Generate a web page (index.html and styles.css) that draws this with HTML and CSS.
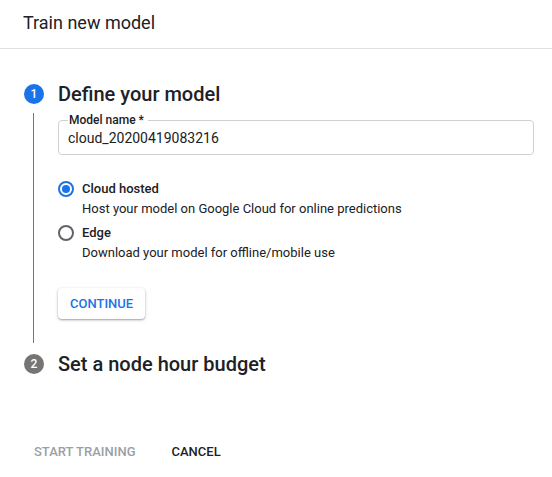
FILE: index.html
```html
<!DOCTYPE html>
<html>
<head>
<meta charset="utf-8">
<link rel="stylesheet" href="styles.css">
</head>
<body>
<div class="dialog">
  <div class="header">Train new model</div>
  <div class="stepper">
    <div class="step">
      <div class="step-head">
        <span class="badge active">1</span>
        <span class="step-title">Define your model</span>
      </div>
      <div class="step-body">
        <fieldset class="field">
          <legend>Model name *</legend>
          <div class="value">cloud_20200419083216</div>
        </fieldset>
        <div class="radios">
          <div class="radio-row">
            <span class="radio checked"></span>
            <div class="radio-text">
              <div class="radio-label">Cloud hosted</div>
              <div class="radio-desc">Host your model on Google Cloud for online predictions</div>
            </div>
          </div>
          <div class="radio-row">
            <span class="radio"></span>
            <div class="radio-text">
              <div class="radio-label">Edge</div>
              <div class="radio-desc">Download your model for offline/mobile use</div>
            </div>
          </div>
        </div>
        <button class="btn-raised">CONTINUE</button>
      </div>
    </div>
    <div class="step">
      <div class="step-head">
        <span class="badge">2</span>
        <span class="step-title">Set a node hour budget</span>
      </div>
    </div>
  </div>
  <div class="actions">
    <button class="btn-flat disabled">START TRAINING</button>
    <button class="btn-flat">CANCEL</button>
  </div>
</div>
</body>
</html>
```
FILE: styles.css
```css
* { box-sizing: border-box; }
html, body { margin: 0; padding: 0; background: #fff; }
body {
  font-family: Roboto, "Liberation Sans", Arial, sans-serif;
  color: #202124;
  width: 552px;
  height: 477px;
  overflow: hidden;
}
.header {
  height: 49px;
  border-bottom: 1px solid #e0e0e0;
  padding: 12px 0 0 23px;
  font-size: 18px;
  line-height: 22px;
  color: #202124;
}
.stepper {
  padding: 35px 18px 0 24px;
}
.step-head {
  display: flex;
  align-items: center;
  height: 20px;
}
.badge {
  width: 20px;
  height: 20px;
  border-radius: 50%;
  background: #757575;
  color: #fff;
  font-size: 12px;
  font-weight: 500;
  display: flex;
  align-items: center;
  justify-content: center;
  margin-right: 14px;
  flex: none;
}
.badge.active { background: #1a73e8; }
.step-title {
  font-size: 20px;
  font-weight: 500;
  line-height: 24px;
  color: #202124;
}
.step-body {
  margin: 9px 0 11px 9px;
  border-left: 1px solid #757575;
  padding: 1px 0 24px 24px;
}
.field {
  margin: 0;
  padding: 0 9px 0 9px;
  border: 1px solid #d0d0d0;
  border-radius: 4px;
  height: 41px;
  min-width: 0;
}
.field legend {
  font-size: 12px;
  font-weight: 500;
  line-height: 12px;
  padding: 0 4px 0 1px;
  color: #202124;
}
.value {
  font-size: 14px;
  line-height: 18px;
  padding-top: 3px;
  color: #202124;
}
.radios {
  margin-top: 25px;
  display: flex;
  flex-direction: column;
  gap: 5px;
}
.radio-row {
  display: flex;
  align-items: flex-start;
}
.radio {
  width: 16px;
  height: 16px;
  border-radius: 50%;
  border: 2px solid #5f6368;
  margin: 1px 8px 0 0;
  flex: none;
  display: flex;
  align-items: center;
  justify-content: center;
}
.radio.checked { border-color: #1a73e8; }
.radio.checked::after {
  content: "";
  width: 8px;
  height: 8px;
  border-radius: 50%;
  background: #1a73e8;
}
.radio-label {
  font-size: 13px;
  font-weight: 500;
  line-height: 18px;
}
.radio-desc {
  font-size: 13px;
  line-height: 20px;
  margin-top: 1px;
  color: #202124;
}
.btn-raised {
  margin-top: 25px;
  height: 31px;
  padding: 0 12px;
  border: none;
  border-radius: 4px;
  background: #fff;
  color: #1a73e8;
  font-family: inherit;
  font-size: 13px;
  font-weight: 500;
  letter-spacing: 0;
  box-shadow: 0 1px 3px rgba(0,0,0,0.3), 0 1px 1px rgba(0,0,0,0.12);
}
.actions {
  margin-top: 59px;
  padding-left: 22px;
  display: flex;
  gap: 12px;
}
.btn-flat {
  height: 36px;
  padding: 0 12px;
  border: none;
  background: transparent;
  font-family: inherit;
  font-size: 13px;
  font-weight: 500;
  letter-spacing: 0;
  color: #202124;
}
.btn-flat.disabled { color: #9aa0a6; }
```
